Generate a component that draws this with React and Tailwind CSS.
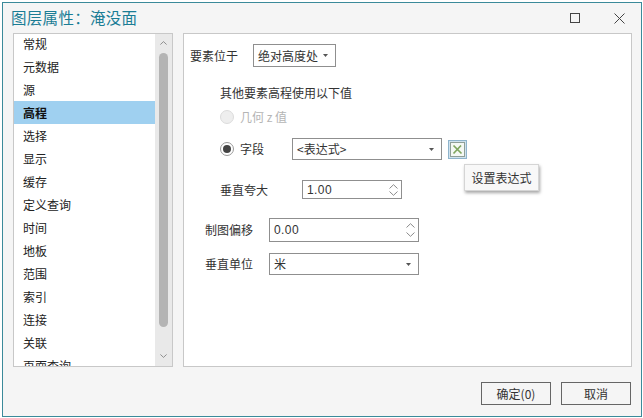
import React from 'react';

const categories = ['常规', '元数据', '源', '高程', '选择', '显示', '缓存', '定义查询', '时间', '地板', '范围', '索引', '连接', '关联', '页面查询'];

const Caret = () => (
  <svg width="5" height="3" viewBox="0 0 5 3" className="shrink-0">
    <path d="M0 0h5L2.5 3z" fill="#555" />
  </svg>
);

const Chevron = ({ up, color = '#8a8a8a', small }) => (
  <svg width={small ? 7 : 9} height={small ? 4 : 5} viewBox="0 0 9 5" className="block">
    <path d={up ? 'M0.5 4.5L4.5 0.7L8.5 4.5' : 'M0.5 0.5L4.5 4.3L8.5 0.5'} fill="none" stroke={color} strokeWidth="1" />
  </svg>
);

const Select = ({ className, children }) => (
  <div className={`flex items-center justify-between border border-[#8f8f8f] bg-white pl-1 pr-[7px] text-[12px] text-[#333] ${className}`}>
    <span>{children}</span>
    <Caret />
  </div>
);

const Spinner = ({ className, value, gap }) => (
  <div className={`flex items-center justify-between border border-[#8f8f8f] bg-white pl-1 pr-[3px] text-[#333] ${className}`}>
    <span className="font-['Liberation_Sans',sans-serif] text-[12px] tracking-[0.4px]">{value}</span>
    <div className={`flex flex-col ${gap}`}>
      <Chevron up />
      <Chevron />
    </div>
  </div>
);

const Radio = ({ checked, disabled }) => (
  <div className={`flex h-[14px] w-[14px] items-center justify-center rounded-full border ${disabled ? 'border-[#dcdcdc] bg-[#eeeeee]' : 'border-[#9a9a9a] bg-white'}`}>
    {checked && <div className="h-[8px] w-[8px] rounded-full bg-[#444]" />}
  </div>
);

export default function App() {
  return (
    <div className="h-[418px] w-[643px] overflow-hidden bg-white pb-[1px] pl-[2px] pr-[1px] pt-[2px] font-['Noto_Sans_CJK_SC','Liberation_Sans',sans-serif]">
      <div className="relative flex h-full flex-col border border-[#3b8a9a] bg-[#f5f5f5]">
        {/* Title bar */}
        <div className="flex h-[30px] shrink-0 items-center justify-between pl-[8px] pr-[16px]">
          <span className="text-[15.5px] leading-none tracking-[0.3px] text-[#1b7d95]">图层属性：淹没面</span>
          <div className="flex items-center gap-[34px]">
            <div className="h-[10px] w-[10px] border border-[#444]" />
            <svg width="11" height="11" viewBox="0 0 11 11">
              <path d="M0.5 0.5l10 10M10.5 0.5l-10 10" stroke="#444" strokeWidth="1" fill="none" />
            </svg>
          </div>
        </div>

        {/* Body */}
        <div className="flex h-[334px] shrink-0 gap-[10px] pl-[10px] pr-[9px]">
          <div className="flex w-[160px] shrink-0 border border-[#c8c8c8] bg-white">
            <div className="h-full min-w-0 flex-1 overflow-hidden">
              <div className="-mt-[2px]">
                {categories.map((name) => (
                  <div
                    key={name}
                    className={`flex h-[23px] items-center pl-[9px] text-[12px] ${name === '高程' ? 'bg-[#9fd0f0] font-bold text-[#111]' : 'text-[#222]'}`}
                  >
                    {name}
                  </div>
                ))}
              </div>
            </div>
            <div className="flex w-[17px] shrink-0 flex-col items-center bg-[#e9e9e9] pt-[7px]">
              <Chevron up small color="#777" />
              <div className="mt-[8px] h-[274px] w-[9px] rounded-full bg-[#b4b4b4]" />
              <div className="mt-[27px]">
                <Chevron small color="#777" />
              </div>
            </div>
          </div>

          <div className="min-w-0 flex-1 border border-[#c8c8c8] bg-white pl-[6px] pt-[10px] text-[12px] text-[#333]">
            <div className="flex h-[23px] items-center">
              <span className="w-[63px]">要素位于</span>
              <Select className="h-[23px] w-[83px]">绝对高度处</Select>
            </div>

            <div className="ml-[30px] mt-[17px] leading-[18px]">其他要素高程使用以下值</div>

            <div className="ml-[30px] mt-[6px] flex h-[18px] items-center gap-[6px] text-[#b5b5b5]">
              <Radio disabled />
              <span>几何 z 值</span>
            </div>

            <div className="ml-[30px] mt-[12px] flex h-[22px] items-center">
              <Radio checked />
              <span className="ml-[6px] w-[52px]">字段</span>
              <Select className="h-[22px] w-[150px]">&lt;表达式&gt;</Select>
              <div className="ml-[6px] flex h-[19px] w-[19px] items-center justify-center border border-[#8fb4cc] bg-[#cfe2ee]">
                <div className="flex h-[15px] w-[15px] items-center justify-center border border-[#8f9f98] bg-[#f4f8f4]">
                  <svg width="11" height="11" viewBox="0 0 11 11">
                    <path d="M1.5 1.5l8 8M9 1.5l-7.5 8" stroke="#7fa65f" strokeWidth="1.7" fill="none" />
                  </svg>
                </div>
              </div>
            </div>

            <div className="ml-[30px] mt-[20px] flex h-[19px] items-center">
              <span className="w-[82px]">垂直夸大</span>
              <Spinner className="h-[19px] w-[100px]" value="1.00" gap="gap-[2px]" />
            </div>

            <div className="ml-[15px] mt-[19px] flex h-[24px] items-center">
              <span className="w-[64px]">制图偏移</span>
              <Spinner className="h-[24px] w-[150px]" value="0.00" gap="gap-[4px]" />
            </div>

            <div className="ml-[15px] mt-[11px] flex h-[22px] items-center">
              <span className="w-[64px]">垂直单位</span>
              <Select className="h-[22px] w-[150px]">米</Select>
            </div>
          </div>
        </div>

        {/* Footer */}
        <div className="flex flex-1 items-start justify-end gap-[10px] pr-[10px] pt-[15px]">
          <button className="h-[23px] w-[70px] border border-[#666] bg-[#f5f5f5] text-[12px] leading-none text-[#333]">确定(0)</button>
          <button className="h-[23px] w-[70px] border border-[#666] bg-[#f5f5f5] text-[12px] leading-none text-[#333]">取消</button>
        </div>

        {/* Tooltip */}
        <div className="absolute left-[461px] top-[161px] flex h-[27px] w-[75px] items-center justify-center border border-[#d5d5d5] bg-[#f8f8f8] text-[12px] text-[#333] shadow-[1px_2px_3px_rgba(0,0,0,0.35)]">
          设置表达式
        </div>
      </div>
    </div>
  );
}
